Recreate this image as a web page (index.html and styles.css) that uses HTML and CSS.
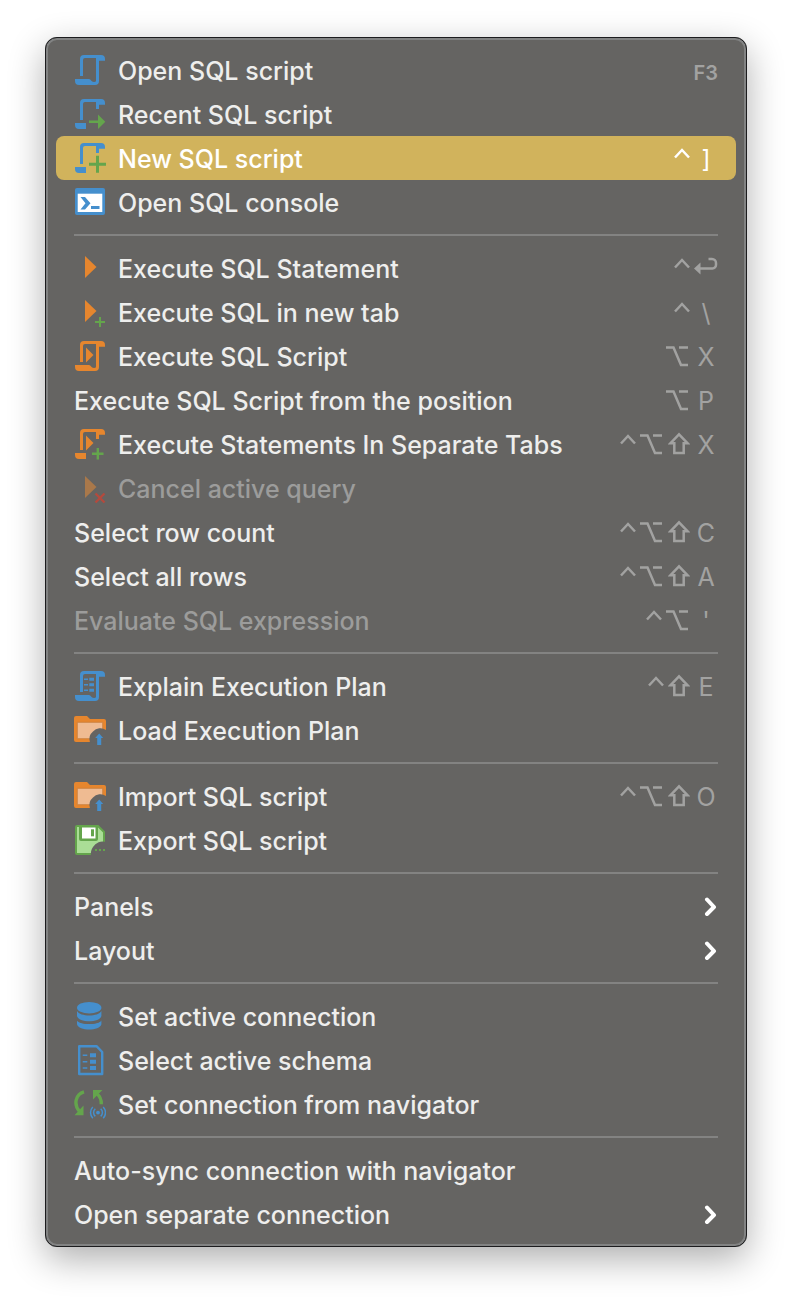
FILE: index.html
```
<!DOCTYPE html>
<html lang="en">
<head>
  <meta charset="UTF-8">
  <meta name="viewport" content="width=device-width, initial-scale=1">
  <title>SQL Editor menu</title>
  <link rel="stylesheet" href="styles.css">
</head>
<body>
  <!-- shared icon shapes -->
  <svg class="sprite" aria-hidden="true">
    <symbol id="scroll" viewBox="0 0 32 32">
      <path fill="currentColor" d="M6 22V5a4 4 0 0 1 4-4h17a4 4 0 0 1 4 4v1.700h-6V27a4 4 0 0 1-4 4H5a4 4 0 0 1-4-4v-2h14c2 0 2 3 5 3 2 0 2-1 2-2V4H11a2 2 0 0 0-2 2v16z"/>
    </symbol>
    <symbol id="scroll-cut" viewBox="0 0 32 32">
      <path fill="currentColor" d="M6 22V5a4 4 0 0 1 4-4h17a4 4 0 0 1 4 4v1.700h-6V11h-3V4H11a2 2 0 0 0-2 2v16zM1 25h11v6H5a4 4 0 0 1-4-4z"/>
    </symbol>
    <symbol id="play" viewBox="0 0 32 32">
      <path fill="currentColor" d="M11 4v22l11.500-11z"/>
    </symbol>
    <symbol id="folder" viewBox="0 0 32 32">
      <path fill="#e6862e" d="M0 4a2 2 0 0 1 2-2h11l3 3h14a2 2 0 0 1 2 2v19a2 2 0 0 1-2 2H2a2 2 0 0 1-2-2z"/>
      <path fill="#efbb92" stroke="#c77d3c" stroke-width=".8" d="M3.300 8.300h25.400v16.400H3.300z"/>
      <path fill="#656462" d="M16 28.500a10 10 0 0 1 3-11 10 10 0 0 1 13-1.500v13z"/>
      <path fill="#458fcd" d="M25.200 19.500l4 4.500h-2v7h-4v-7h-2z"/>
    </symbol>
    <symbol id="ctrl" viewBox="0 0 16 24">
      <path d="M1 11.500l7-7.500 7 7.500"/>
    </symbol>
    <symbol id="alt" viewBox="0 0 24 24">
      <path d="M0 3.500h7.500L15 21h7M13 3.500h9"/>
    </symbol>
    <symbol id="shift" viewBox="0 0 22 24">
      <path d="M11 2.300L2.500 11.200h3.800V21h9.400v-9.800h3.800z"/>
    </symbol>
    <symbol id="arrow" viewBox="0 0 14 20">
      <path d="M3 3.500L10 11l-7 7"/>
    </symbol>
  </svg>

  <nav class="menu" aria-label="SQL Editor">
    <button class="item" type="button">
      <svg class="icon blue"><use href="#scroll"/></svg>
      <span class="label">Open SQL script</span>
      <kbd class="keys fkey">F3</kbd>
    </button>
    <button class="item" type="button">
      <svg class="icon blue" viewBox="0 0 32 32">
        <use href="#scroll-cut"/>
        <path fill="#64a54c" d="M15 22.500h9v-6l7.300 7.200-7.300 7.300v-6h-9z"/>
      </svg>
      <span class="label">Recent SQL script</span>
    </button>
    <button class="item selected" type="button">
      <svg class="icon blue" viewBox="0 0 32 32">
        <use href="#scroll-cut"/>
        <path fill="none" stroke="#64a54c" stroke-width="3" d="M15 22.300h17M23.500 13.800v17"/>
      </svg>
      <span class="label">New SQL script</span>
      <kbd class="keys"><svg class="mod ctrl"><use href="#ctrl"/></svg><span class="key">]</span></kbd>
    </button>
    <button class="item" type="button">
      <svg class="icon" viewBox="0 0 32 32">
        <rect x="1" y="2" width="30" height="27" rx="2" fill="#458fcd"/>
        <path fill="#fff" d="M3.700 7.700h24.600V26H3.700z"/>
        <path fill="#458fcd" d="M6.500 11h4.500l5.500 6.200-5.500 6.200H6.500l5-6.200zM17 20h8.500v3H17z"/>
      </svg>
      <span class="label">Open SQL console</span>
    </button>

    <hr class="separator">

    <button class="item" type="button">
      <svg class="icon orange"><use href="#play"/></svg>
      <span class="label">Execute SQL Statement</span>
      <kbd class="keys">
        <svg class="mod ctrl"><use href="#ctrl"/></svg>
        <svg class="mod return" viewBox="0 0 24 24"><path d="M14.500 3H18a4 4 0 0 1 4 4v2a3.500 3.500 0 0 1-3.500 3.500H6"/><path class="solid" d="M0 12.500l6.500-6v12z"/></svg>
      </kbd>
    </button>
    <button class="item" type="button">
      <svg class="icon orange" viewBox="0 0 32 32">
        <use href="#play"/>
        <path fill="none" stroke="#64a54c" stroke-width="2" d="M21 26h10M26 21v10"/>
      </svg>
      <span class="label">Execute SQL in new tab</span>
      <kbd class="keys"><svg class="mod ctrl"><use href="#ctrl"/></svg><span class="key">\</span></kbd>
    </button>
    <button class="item" type="button">
      <svg class="icon orange" viewBox="0 0 32 32">
        <use href="#scroll"/>
        <path fill="currentColor" d="M12 7.500v15l7.500-7.500z"/>
      </svg>
      <span class="label">Execute SQL Script</span>
      <kbd class="keys"><svg class="mod alt"><use href="#alt"/></svg><span class="key">X</span></kbd>
    </button>
    <button class="item" type="button">
      <span class="label">Execute SQL Script from the position</span>
      <kbd class="keys"><svg class="mod alt"><use href="#alt"/></svg><span class="key">P</span></kbd>
    </button>
    <button class="item" type="button">
      <svg class="icon orange" viewBox="0 0 32 32">
        <use href="#scroll-cut"/>
        <path fill="currentColor" d="M12 7.500v15l7.500-7.500z"/>
        <path fill="none" stroke="#64a54c" stroke-width="2.400" d="M18 25.800h11.500M23.800 20v11.500"/>
      </svg>
      <span class="label">Execute Statements In Separate Tabs</span>
      <kbd class="keys"><svg class="mod ctrl"><use href="#ctrl"/></svg><svg class="mod alt"><use href="#alt"/></svg><svg class="mod shift"><use href="#shift"/></svg><span class="key">X</span></kbd>
    </button>
    <button class="item" type="button" disabled>
      <svg class="icon orange-dim" viewBox="0 0 32 32">
        <use href="#play"/>
        <path fill="none" stroke="#b34a3e" stroke-width="2.400" d="M21.500 21.500l9 9M30.500 21.500l-9 9"/>
      </svg>
      <span class="label">Cancel active query</span>
    </button>
    <button class="item" type="button">
      <span class="label">Select row count</span>
      <kbd class="keys"><svg class="mod ctrl"><use href="#ctrl"/></svg><svg class="mod alt"><use href="#alt"/></svg><svg class="mod shift"><use href="#shift"/></svg><span class="key">C</span></kbd>
    </button>
    <button class="item" type="button">
      <span class="label">Select all rows</span>
      <kbd class="keys"><svg class="mod ctrl"><use href="#ctrl"/></svg><svg class="mod alt"><use href="#alt"/></svg><svg class="mod shift"><use href="#shift"/></svg><span class="key">A</span></kbd>
    </button>
    <button class="item" type="button" disabled>
      <span class="label">Evaluate SQL expression</span>
      <kbd class="keys"><svg class="mod ctrl"><use href="#ctrl"/></svg><svg class="mod alt"><use href="#alt"/></svg><span class="key">'</span></kbd>
    </button>

    <hr class="separator">

    <button class="item" type="button">
      <svg class="icon blue" viewBox="0 0 32 32">
        <use href="#scroll"/>
        <path fill="none" stroke="currentColor" stroke-width="1.400" d="M10 9.300h4M10 14.800h4M10 20.300h4"/>
        <path fill="none" stroke="currentColor" stroke-width="3" d="M15.300 9.300H20M15.300 14.800H20M15.300 20.300H20"/>
      </svg>
      <span class="label">Explain Execution Plan</span>
      <kbd class="keys"><svg class="mod ctrl"><use href="#ctrl"/></svg><svg class="mod shift"><use href="#shift"/></svg><span class="key">E</span></kbd>
    </button>
    <button class="item" type="button">
      <svg class="icon"><use href="#folder"/></svg>
      <span class="label">Load Execution Plan</span>
    </button>

    <hr class="separator">

    <button class="item" type="button">
      <svg class="icon"><use href="#folder"/></svg>
      <span class="label">Import SQL script</span>
      <kbd class="keys"><svg class="mod ctrl"><use href="#ctrl"/></svg><svg class="mod alt"><use href="#alt"/></svg><svg class="mod shift"><use href="#shift"/></svg><span class="key">O</span></kbd>
    </button>
    <button class="item" type="button">
      <svg class="icon" viewBox="0 0 32 32">
        <path fill="#aadd96" stroke="#64a54c" stroke-width="2" d="M3 2h21l6 6v22H3a1 1 0 0 1-1-1V3a1 1 0 0 1 1-1z"/>
        <path fill="#64a54c" d="M5 1h19v14a2 2 0 0 1-2 2H7a2 2 0 0 1-2-2z"/>
        <path fill="#fff" d="M8 3.500h13.500v11H8z"/>
        <path fill="#64a54c" d="M17 5.300h3v7h-3z"/>
        <path fill="#656462" d="M17 32a12 12 0 0 1 2-9 11 11 0 0 1 13-5v14z"/>
        <path fill="#64a54c" d="M21 25h2v2h-2zM25 25h2v2h-2zM29 25h2v2h-2z"/>
      </svg>
      <span class="label">Export SQL script</span>
    </button>

    <hr class="separator">

    <button class="item" type="button" aria-haspopup="menu">
      <span class="label">Panels</span>
      <svg class="arrow"><use href="#arrow"/></svg>
    </button>
    <button class="item" type="button" aria-haspopup="menu">
      <span class="label">Layout</span>
      <svg class="arrow"><use href="#arrow"/></svg>
    </button>

    <hr class="separator">

    <button class="item" type="button">
      <svg class="icon blue" viewBox="0 0 32 32">
        <g fill="currentColor">
          <ellipse cx="15.200" cy="7.700" rx="12.200" ry="5.800"/>
          <path d="M3 11c3 6 21.400 6 24.400 0v5c-1.500 7-22.900 7-24.400 0z"/>
          <path d="M3 19.500c3 6 21.400 6 24.400 0v4.700c-1.500 7-22.900 7-24.400 0z"/>
        </g>
        <path fill="none" stroke="#656462" stroke-width="2" d="M2 17.800c3 7 23.400 7 26.400 0"/>
      </svg>
      <span class="label">Set active connection</span>
    </button>
    <button class="item" type="button">
      <svg class="icon blue" viewBox="0 0 32 32">
        <path fill="none" stroke="currentColor" stroke-width="2.400" stroke-linejoin="round" d="M5.200 2.200h17.300l5.700 5.800v22H5.200z"/>
        <path fill="none" stroke="currentColor" stroke-width="1.400" d="M8.700 11.300h4.600M8.700 17.700h4.600M8.700 24h4.600"/>
        <path fill="none" stroke="currentColor" stroke-width="4" d="M16 11.300h6M16 17.700h6M16 24h6"/>
      </svg>
      <span class="label">Select active schema</span>
    </button>
    <button class="item" type="button">
      <svg class="icon" viewBox="0 0 32 32">
        <g fill="none" stroke="#64a54c" stroke-width="3.400">
          <path d="M10 3.800C2 6 -1 16 5.500 23.500"/>
          <path d="M22.500 5.500c4 3 5 6 4.800 10.800"/>
        </g>
        <path fill="#64a54c" d="M9.500 17.500v9.800H.5zM19 2h9.500L19 11.500z"/>
        <g fill="none" stroke="#458fcd" stroke-width="1.500">
          <path d="M21.300 20.800a5 5 0 0 0 0 7.600M26.700 20.800a5 5 0 0 1 0 7.600"/>
          <path d="M18.800 19a8 8 0 0 0 0 11.200M29.200 19a8 8 0 0 1 0 11.200"/>
        </g>
        <circle cx="24" cy="24.600" r="1.900" fill="#458fcd"/>
      </svg>
      <span class="label">Set connection from navigator</span>
    </button>

    <hr class="separator">

    <button class="item" type="button">
      <span class="label">Auto-sync connection with navigator</span>
    </button>
    <button class="item" type="button" aria-haspopup="menu">
      <span class="label">Open separate connection</span>
      <svg class="arrow"><use href="#arrow"/></svg>
    </button>
  </nav>
</body>
</html>
```
FILE: styles.css
```
* {
  box-sizing: border-box;
}
body {
  margin: 0;
  padding: 37px 45px 53px;
  background-color: #fff;
  font-family: Inter, "Liberation Sans", sans-serif;
}
.sprite {
  display: none;
}
.menu {
  padding: 8px;
  background-color: #656462;
  border: 3px solid #828383;
  border-radius: 12px;
  outline: 1px solid #1c1c1e;
  outline-offset: -1px;
  box-shadow: 0 12px 36px rgba(0, 0, 0, 0.32);
}
.item {
  display: flex;
  align-items: center;
  gap: 12px;
  width: 100%;
  height: 44px;
  padding: 0 18px;
  border: none;
  border-radius: 8px;
  background: none;
  color: #eeeeed;
  font-family: inherit;
  font-size: 25px;
  font-weight: 500;
  line-height: 32px;
  text-align: left;
}
.item:disabled {
  color: #9c9c9b;
}
.item.selected {
  background-color: #d1b35c;
  color: #fff;
}
.label {
  flex: 1;
  padding-top: 2px;
  white-space: nowrap;
}
.icon {
  flex: none;
  width: 32px;
  height: 32px;
}
.blue {
  color: #458fcd;
}
.orange {
  color: #e6862e;
}
.orange-dim {
  color: #a9784a;
}
.keys {
  display: flex;
  align-items: center;
  gap: 4px;
  color: #a2a2a1;
  font-family: inherit;
  font-weight: 400;
}
.selected .keys {
  color: #fff;
}
.key {
  width: 24px;
  padding-top: 2px;
  text-align: center;
}
.fkey {
  padding-top: 6px;
  font-size: 20px;
  font-weight: 600;
}
.mod {
  height: 24px;
  fill: none;
  stroke: currentColor;
  stroke-width: 2.5;
}
.ctrl {
  width: 16px;
}
.alt,
.return {
  width: 24px;
}
.shift {
  width: 22px;
}
.solid {
  fill: currentColor;
  stroke: none;
}
.arrow {
  width: 14px;
  height: 20px;
  fill: none;
  stroke: #fff;
  stroke-width: 4;
  stroke-linecap: round;
  stroke-linejoin: round;
}
.separator {
  height: 2px;
  margin: 10px 18px;
  border: none;
  background-color: #838382;
}
```
